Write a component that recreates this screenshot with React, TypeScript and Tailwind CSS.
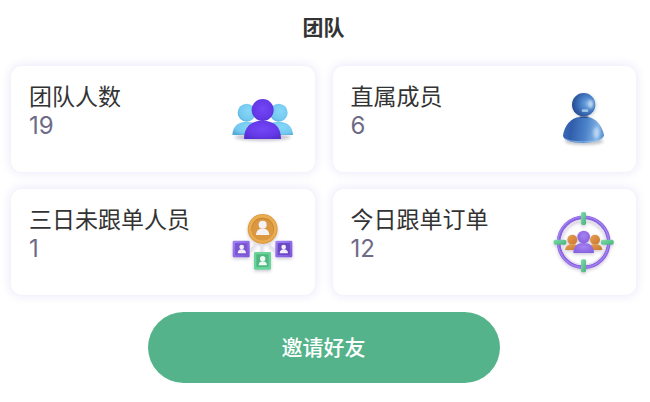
import { useId, type ReactNode } from 'react';

function TeamIcon() {
  const id = useId();
  return (
    <svg viewBox="36 24 186 186" className="size-full overflow-visible" aria-hidden="true">
      <defs>
        <radialGradient id={`${id}sky`} cx="0.6" cy="0.4" r="0.7">
          <stop offset="0" stopColor="#86d8fa" />
          <stop offset="0.7" stopColor="#74c8ee" />
          <stop offset="1" stopColor="#55abd8" />
        </radialGradient>
        <radialGradient id={`${id}violet`} cx="0.5" cy="0.45" r="0.6">
          <stop offset="0" stopColor="#7347f5" />
          <stop offset="0.7" stopColor="#6539e8" />
          <stop offset="1" stopColor="#5730d2" />
        </radialGradient>
        <filter id={`${id}blur`} x="-20%" y="-80%" width="140%" height="260%">
          <feGaussianBlur stdDeviation="5" />
        </filter>
      </defs>
      <ellipse cx="128" cy="172" rx="84" ry="10" fill="#3b3560" opacity="0.3" filter={`url(#${id}blur)`} />
      <circle cx="80" cy="98" r="27" fill={`url(#${id}sky)`} />
      <circle cx="176" cy="98" r="27" fill={`url(#${id}sky)`} />
      <path d="M37 165C38 140 53 125 80 125C108 125 124 140 125 165Z" fill={`url(#${id}sky)`} />
      <path d="M131 165C132 140 148 125 175 125C203 125 218 140 219 165Z" fill={`url(#${id}sky)`} />
      <path d="M72 177C72 140 94 122 128 122C162 122 183 140 183 177Z" fill={`url(#${id}violet)`} />
      <circle cx="128" cy="90" r="33" fill={`url(#${id}violet)`} />
    </svg>
  );
}

function MemberIcon() {
  const id = useId();
  return (
    <svg viewBox="24 24 186 186" className="size-full overflow-visible" aria-hidden="true">
      <defs>
        <radialGradient id={`${id}head`} cx="0.68" cy="0.45" r="0.7">
          <stop offset="0" stopColor="#79aee6" />
          <stop offset="0.5" stopColor="#4379c2" />
          <stop offset="1" stopColor="#24468c" />
        </radialGradient>
        <linearGradient id={`${id}body`} x1="0" y1="0.5" x2="1" y2="0.6">
          <stop offset="0" stopColor="#3a68b4" />
          <stop offset="0.2" stopColor="#315eac" />
          <stop offset="0.55" stopColor="#4c83ca" />
          <stop offset="0.85" stopColor="#85b5e6" />
          <stop offset="1" stopColor="#588fce" />
        </linearGradient>
        <filter id={`${id}blur`} x="-50%" y="-80%" width="200%" height="260%">
          <feGaussianBlur stdDeviation="5" />
        </filter>
        <filter id={`${id}glow`} x="-100%" y="-100%" width="300%" height="300%">
          <feGaussianBlur stdDeviation="4" />
        </filter>
        <filter id={`${id}soft`} x="-50%" y="-50%" width="200%" height="200%">
          <feGaussianBlur stdDeviation="2" />
        </filter>
      </defs>
      <ellipse cx="117" cy="184" rx="58" ry="11" fill="#2a3040" opacity="0.28" filter={`url(#${id}blur)`} />
      <circle cx="118" cy="78" r="37" fill="#2a3040" opacity="0.16" filter={`url(#${id}blur)`} />
      <path
        d="M54 168C56 140 78 112 104 111H128C153 112 174 142 177 166C174 196 58 196 54 168Z"
        fill={`url(#${id}body)`}
      />
      <path d="M60 176C76 189 158 189 172 175" fill="none" stroke="#9dcaf2" strokeWidth="4" opacity="0.6" />
      <ellipse cx="117" cy="111" rx="14" ry="3" fill="#1d3768" opacity="0.6" filter={`url(#${id}soft)`} />
      <circle cx="116" cy="74" r="35" fill={`url(#${id}head)`} />
      <ellipse cx="137" cy="72" rx="7" ry="12" fill="#e2f0fc" opacity="0.8" filter={`url(#${id}glow)`} />
      <rect x="110" y="88" width="20" height="8" rx="4" fill="#c4e0f8" opacity="0.7" filter={`url(#${id}soft)`} />
      <ellipse cx="154" cy="158" rx="9" ry="17" fill="#e3f0fc" opacity="0.6" filter={`url(#${id}glow)`} />
    </svg>
  );
}

function NetworkIcon() {
  const id = useId();
  return (
    <svg viewBox="36 33 186 186" className="size-full overflow-visible" aria-hidden="true">
      <defs>
        <linearGradient id={`${id}purple`} x1="0" y1="0" x2="1" y2="1">
          <stop offset="0" stopColor="#a083f4" />
          <stop offset="1" stopColor="#7c55d9" />
        </linearGradient>
        <filter id={`${id}shadow`} x="-30%" y="-30%" width="160%" height="160%">
          <feDropShadow dx="0" dy="5" stdDeviation="5" floodColor="#3b3560" floodOpacity="0.25" />
        </filter>
      </defs>
      <g filter={`url(#${id}shadow)`}>
        <path d="M126 128V160M106 128Q104 146 88 147M148 128Q150 146 166 147" fill="none" stroke="#e2e1ec" strokeWidth="6" />
        <circle cx="128" cy="87" r="45" fill="#dd9b3f" />
        <circle cx="128" cy="86" r="42" fill="#e9ad50" />
        <circle cx="128" cy="87" r="34" fill="#c98632" />
        <circle cx="128" cy="89" r="32" fill="#db9840" />
        <circle cx="128" cy="74" r="12" fill="#f4f2f6" />
        <path d="M108 105C109 90 116 86 128 86C140 86 147 91 148 105Z" fill="#f4f2f6" />
        <rect x="38" y="122" width="51" height="50" rx="4" fill={`url(#${id}purple)`} />
        <rect x="45" y="129" width="37" height="36" rx="2" fill="#7a56d2" />
        <circle cx="65" cy="141" r="7" fill="#f2effa" />
        <path d="M53 160C54 151 58 148 65 148C73 148 77 151 78 160Z" fill="#f2effa" />
        <rect x="166" y="122" width="51" height="50" rx="4" fill={`url(#${id}purple)`} />
        <rect x="173" y="129" width="37" height="36" rx="2" fill="#6c4ac4" />
        <circle cx="191" cy="141" r="7" fill="#f2effa" />
        <path d="M179 160C180 151 184 148 191 148C199 148 203 151 204 160Z" fill="#f2effa" />
        <rect x="102" y="156" width="51" height="53" rx="4" fill="#69d49a" />
        <rect x="109" y="163" width="37" height="38" rx="2" fill="#4fb880" />
        <circle cx="128" cy="176" r="8" fill="#eefaf3" />
        <path d="M116 196C117 187 121 184 128 184C136 184 140 187 141 196Z" fill="#eefaf3" />
      </g>
    </svg>
  );
}

function TargetIcon() {
  const id = useId();
  return (
    <svg viewBox="39 33 186 186" className="size-full overflow-visible" aria-hidden="true">
      <defs>
        <linearGradient id={`${id}orange`} x1="0" y1="0" x2="1" y2="1">
          <stop offset="0" stopColor="#e7a052" />
          <stop offset="1" stopColor="#c97730" />
        </linearGradient>
        <radialGradient id={`${id}violet`} cx="0.5" cy="0.4" r="0.65">
          <stop offset="0" stopColor="#a682f2" />
          <stop offset="1" stopColor="#8560de" />
        </radialGradient>
        <linearGradient id={`${id}green`} x1="0" y1="0" x2="1" y2="1">
          <stop offset="0" stopColor="#7edda9" />
          <stop offset="1" stopColor="#48b17f" />
        </linearGradient>
        <filter id={`${id}shadow`} x="-30%" y="-30%" width="160%" height="160%">
          <feDropShadow dx="0" dy="5" stdDeviation="4" floodColor="#3b3560" floodOpacity="0.25" />
        </filter>
      </defs>
      <g filter={`url(#${id}shadow)`}>
        <circle cx="131" cy="127" r="75" fill="none" stroke="#8a62e2" strokeWidth="11" />
        <circle cx="130" cy="126" r="76" fill="none" stroke="#a283f0" strokeWidth="4" />
        <circle cx="131" cy="127" r="67" fill="none" stroke="#e2deec" strokeWidth="4" />
        <rect x="123" y="36" width="15" height="39" rx="5" fill={`url(#${id}green)`} />
        <rect x="123" y="178" width="15" height="39" rx="5" fill={`url(#${id}green)`} />
        <rect x="41" y="119" width="38" height="15" rx="5" fill={`url(#${id}green)`} />
        <rect x="183" y="119" width="38" height="15" rx="5" fill={`url(#${id}green)`} />
      </g>
      <g filter={`url(#${id}shadow)`}>
        <circle cx="97" cy="119" r="15" fill={`url(#${id}orange)`} />
        <circle cx="165" cy="119" r="15" fill={`url(#${id}orange)`} />
        <path d="M75 150C77 138 85 133 97 133C109 133 117 138 118 150Z" fill={`url(#${id}orange)`} />
        <path d="M145 150C146 138 154 133 166 133C178 133 186 138 187 150Z" fill={`url(#${id}orange)`} />
        <path d="M100 159C101 138 111 129 131 129C151 129 161 138 162 159Z" fill={`url(#${id}violet)`} />
        <circle cx="131" cy="111" r="19" fill={`url(#${id}violet)`} />
      </g>
    </svg>
  );
}

function StatCard({ label, value, icon }: { label: string; value: number; icon: ReactNode }) {
  return (
    <div className="flex items-start justify-between rounded-[11px] bg-white pr-[21px] pl-[18px] shadow-[0_0_8px_2px_rgba(108,99,220,0.12)]">
      <div className="pt-[17px] pb-[31px]">
        <p className="text-[23px] leading-6 text-[#333333]">{label}</p>
        <p className="mt-1 font-['Inter','Noto_Sans_CJK_SC',sans-serif] text-2xl leading-[30px] text-[#6e6b87]">{value}</p>
      </div>
      <div className="size-[62px] shrink-0 self-center">{icon}</div>
    </div>
  );
}

const stats = [
  { label: '团队人数', value: 19, icon: <TeamIcon /> },
  { label: '直属成员', value: 6, icon: <MemberIcon /> },
  { label: '三日未跟单人员', value: 1, icon: <NetworkIcon /> },
  { label: '今日跟单订单', value: 12, icon: <TargetIcon /> },
];

export default function App() {
  return (
    <main className="min-h-screen bg-white pt-[10px] pr-[14px] pb-[19px] pl-[11px] font-['Noto_Sans_CJK_SC',sans-serif]">
      <h1 className="text-center text-[21px] leading-8 font-bold text-[#333333]">团队</h1>

      <div className="mt-6 grid grid-cols-2 gap-x-[18px] gap-y-[17px]">
        {stats.map((stat) => (
          <StatCard key={stat.label} {...stat} />
        ))}
      </div>

      <button
        type="button"
        className="mx-auto mt-[17px] block h-[71px] w-[352px] max-w-full rounded-full bg-[#55b38b] pb-[2px] text-[21px] font-medium text-white"
      >
        邀请好友
      </button>
    </main>
  );
}
